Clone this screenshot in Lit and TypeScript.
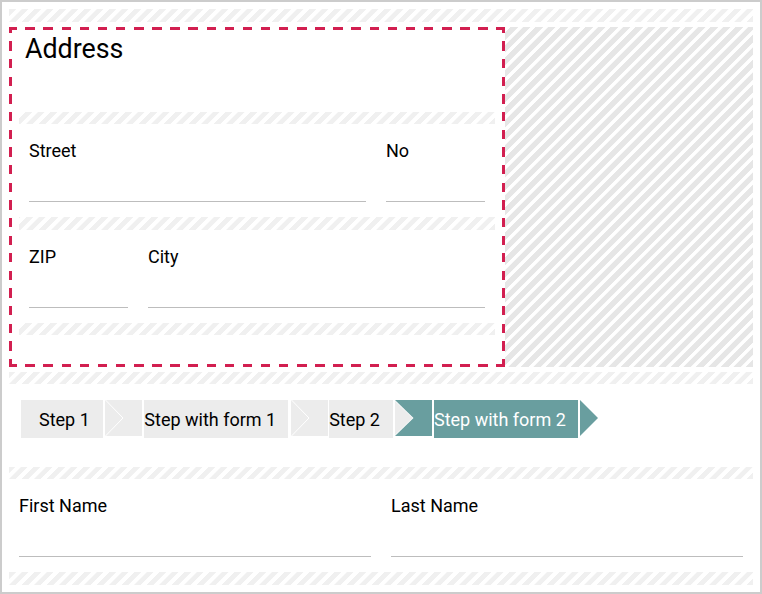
import { LitElement, html, css, svg } from "lit";
import { customElement } from "lit/decorators.js";

const GREY = "#ececec";
const TEAL = "#699e9f";

function arrow(prev: string, next: string | null, kind: "grey" | "join" | "end") {
  if (kind === "grey") {
    return html`<svg class="arrow" width="38" height="36" viewBox="0 0 38 36">
      ${svg`<rect width="38" height="36" fill=${next ?? "none"}></rect>
      <polygon points="0.5,-1 19,18 0.5,37" fill=${prev} stroke="#fff" stroke-width="1"></polygon>`}
    </svg>`;
  }
  if (kind === "join") {
    return html`<svg class="arrow" width="37" height="36" viewBox="0 0 37 36">
      ${svg`<rect width="37" height="36" fill=${next ?? "none"}></rect>
      <polygon points="0,0 18.5,18 0,36" fill="#fff"></polygon>
      <polygon points="0,1 17.5,18 0,35" fill=${prev}></polygon>`}
    </svg>`;
  }
  return html`<svg class="arrow" width="18" height="36" viewBox="0 0 18 36">
    ${svg`<polygon points="0,0 18,18 0,36" fill=${prev}></polygon>`}
  </svg>`;
}

@customElement("app-root")
export class AppRoot extends LitElement {
  static styles = css`
    :host {
      display: block;
      box-sizing: border-box;
      width: 762px;
      height: 594px;
      border: 2px solid #ccc;
      padding: 7px 7px 0;
      background: #fff;
      color: #000;
      font-family: Roboto, "Liberation Sans", sans-serif;
      font-size: 18px;
    }
    .hatch {
      background: repeating-linear-gradient(-45deg, #f0f0f0 0, #f0f0f0 4.3px, #fff 4.8px, #fff 8.4px, #f0f0f0 8.84px);
    }
    .h13 { height: 13px; }
    .h12 { height: 12px; }
    .main {
      display: flex;
      height: 340px;
      margin: 5px 0;
    }
    .box {
      box-sizing: border-box;
      width: 496px;
      height: 340px;
      padding: 3px 10px;
      background:
        repeating-linear-gradient(90deg, #d21f50 -1.8px, #d21f50 7.7px, transparent 7.7px, transparent 16.32px) top / 100% 3px no-repeat,
        repeating-linear-gradient(90deg, #d21f50 -1.8px, #d21f50 7.7px, transparent 7.7px, transparent 16.32px) bottom / 100% 3px no-repeat,
        repeating-linear-gradient(180deg, #d21f50 -3.3px, #d21f50 6px, transparent 6px, transparent 14.35px) left / 3px 100% no-repeat,
        repeating-linear-gradient(180deg, #d21f50 -3.3px, #d21f50 6px, transparent 6px, transparent 14.35px) right / 3px 100% no-repeat;
    }
    .side {
      flex: 1;
      background: repeating-linear-gradient(-45deg, #e6e6e6 0, #e6e6e6 4.9px, #fff 5.4px, #fff 8.4px, #e6e6e6 8.84px);
    }
    .title {
      height: 82px;
      margin: 0;
      padding: 0 6px;
      font-size: 26.8px;
      font-weight: 400;
      line-height: 38px;
    }
    .row {
      display: flex;
      gap: 20px;
      height: 93px;
      box-sizing: border-box;
      padding: 0 10px;
    }
    .row.outer { padding: 0; gap: 20px; margin: 0 10px; }
    .field {
      flex: 1 1 0;
      min-width: 0;
      height: 78px;
      border-bottom: 1px solid #bdbdbd;
      padding-top: 16px;
      box-sizing: border-box;
      line-height: 21px;
    }
    .field.fixed { flex: 0 0 99px; }
    .wizard {
      display: flex;
      align-items: flex-start;
      gap: 2px;
      height: 83px;
      box-sizing: border-box;
      padding: 16px 12px 0;
    }
    .step {
      height: 38px;
      line-height: 40px;
      padding-right: 12px;
      background: #ececec;
      white-space: nowrap;
    }
    .step.first { padding-left: 18px; padding-right: 13px; margin-right: -0.5px; }
    .step.tight { margin-left: -1px; padding-right: 13px; }
    .step.active { background: #699e9f; color: #fff; }
    .arrow { display: block; flex: none; }
  `;

  render() {
    return html`
      <div class="hatch h13"></div>
      <div class="main">
        <section class="box">
          <h2 class="title">Address</h2>
          <div class="hatch h12"></div>
          <div class="row">
            <div class="field">Street</div>
            <div class="field fixed">No</div>
          </div>
          <div class="hatch h13"></div>
          <div class="row">
            <div class="field fixed">ZIP</div>
            <div class="field">City</div>
          </div>
          <div class="hatch h12"></div>
        </section>
        <div class="side"></div>
      </div>
      <div class="hatch h12"></div>
      <div class="wizard">
        <div class="step first">Step 1</div>
        ${arrow(GREY, GREY, "grey")}
        <div class="step">Step with form 1</div>
        ${arrow(GREY, GREY, "grey")}
        <div class="step tight">Step 2</div>
        ${arrow(GREY, TEAL, "join")}
        <div class="step active">Step with form 2</div>
        ${arrow(TEAL, null, "end")}
      </div>
      <div class="hatch h12"></div>
      <div class="row outer">
        <div class="field">First Name</div>
        <div class="field">Last Name</div>
      </div>
      <div class="hatch h13"></div>
    `;
  }
}
